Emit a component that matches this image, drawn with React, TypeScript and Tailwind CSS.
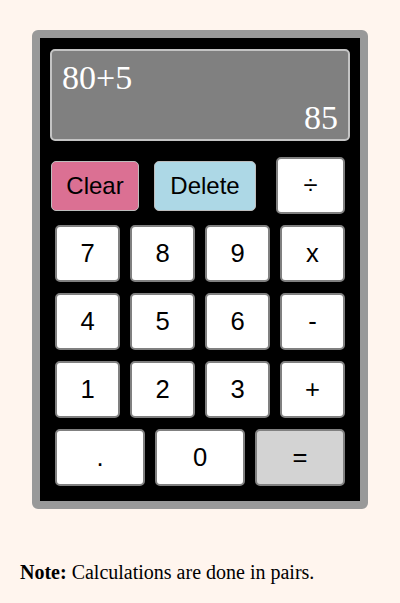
const digitRows = [
  ['7', '8', '9', 'x'],
  ['4', '5', '6', '-'],
  ['1', '2', '3', '+'],
];

const keyBase =
  "h-[57px] rounded-[5px] border-2 border-[#808080] text-[25.6px] text-black font-['Liberation_Sans',Arial,sans-serif] flex items-center justify-center";

export default function App() {
  return (
    <div className="min-h-[603px] bg-[#fff5ee] pt-[30px] font-['Liberation_Serif','Times_New_Roman',serif]">
      {/* Calculator body */}
      <div className="mx-auto w-[336px] rounded-[6px] border-8 border-[#999999] bg-black pt-[11px] pb-[15px]">
        {/* Display */}
        <div className="mx-[10px] h-[92px] rounded-[5px] border-2 border-[#c4c4c4] bg-[#808080] px-[10px] pt-[7px] text-[34px] leading-[40px] text-white font-['Liberation_Serif','Times_New_Roman',serif]">
          <div>80+5</div>
          <div className="text-right">85</div>
        </div>

        {/* Clear / Delete / divide */}
        <div className="mt-[16px] flex items-center pl-[11px]">
          <button className="h-[50px] w-[88px] rounded-[5px] border border-[#bdbdbd] bg-[#db7093] text-[24px] text-black font-['Liberation_Sans',Arial,sans-serif]">
            Clear
          </button>
          <button className="ml-[15px] h-[50px] w-[102px] rounded-[5px] border border-[#bdbdbd] bg-[#add8e6] text-[24px] text-black font-['Liberation_Sans',Arial,sans-serif]">
            Delete
          </button>
          <button className="ml-[20px] h-[57px] w-[69px] rounded-[5px] border-2 border-[#808080] bg-white text-[25.6px] text-black font-['Liberation_Sans',Arial,sans-serif]">
            ÷
          </button>
        </div>

        {/* Keypad */}
        <div className="mt-[11px] flex flex-col gap-[11px] px-[15px]">
          {digitRows.map((row) => (
            <div key={row.join('')} className="grid grid-cols-4 gap-[10px]">
              {row.map((k) => (
                <button key={k} className={`${keyBase} bg-white`}>
                  {k}
                </button>
              ))}
            </div>
          ))}
          <div className="grid grid-cols-3 gap-[10px]">
            <button className={`${keyBase} bg-white`}>.</button>
            <button className={`${keyBase} bg-white`}>0</button>
            <button className={`${keyBase} bg-[#d3d3d3]`}>=</button>
          </div>
        </div>
      </div>

      <p className="mt-[48px] px-[20px] text-[20px] text-black">
        <b>Note:</b> Calculations are done in pairs.
      </p>
    </div>
  );
}
